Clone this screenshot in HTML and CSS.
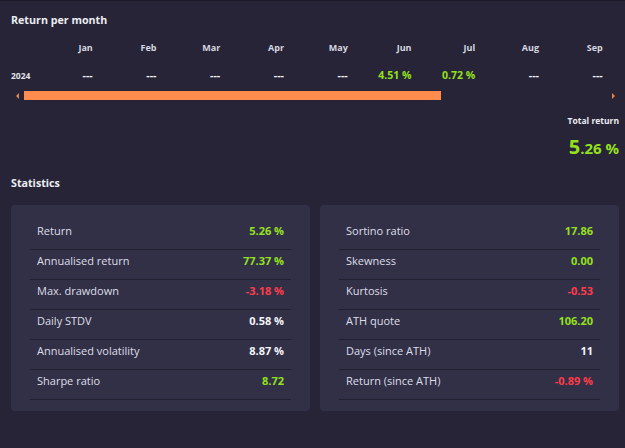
FILE: index.html
```html
<!DOCTYPE html>
<html lang="en">
<head>
    <meta charset="UTF-8">
    <meta name="viewport" content="width=device-width, initial-scale=1.0">
    <title>Performance</title>
    <link rel="stylesheet" href="styles.css">
</head>
<body>
    <div class="page">
        <h2 class="section-title">Return per month</h2>

        <div class="monthly">
            <div class="month-grid">
                <div class="cell label"></div>
                <div class="cell head">Jan</div>
                <div class="cell head">Feb</div>
                <div class="cell head">Mar</div>
                <div class="cell head">Apr</div>
                <div class="cell head">May</div>
                <div class="cell head">Jun</div>
                <div class="cell head">Jul</div>
                <div class="cell head">Aug</div>
                <div class="cell head">Sep</div>

                <div class="cell label">2024</div>
                <div class="cell val">---</div>
                <div class="cell val">---</div>
                <div class="cell val">---</div>
                <div class="cell val">---</div>
                <div class="cell val">---</div>
                <div class="cell val pos">4.51 %</div>
                <div class="cell val pos">0.72 %</div>
                <div class="cell val">---</div>
                <div class="cell val">---</div>
            </div>
        </div>

        <div class="scrollbar">
            <div class="scroll-btn"><span class="arrow-left"></span></div>
            <div class="scroll-track">
                <div class="scroll-thumb"></div>
            </div>
            <div class="scroll-btn"><span class="arrow-right"></span></div>
        </div>

        <div class="total">
            <div class="total-label">Total return</div>
            <div class="total-value"><span class="int">5</span>.26 %</div>
        </div>

        <h2 class="section-title stats-title">Statistics</h2>

        <div class="stats">
            <div class="card">
                <div class="row"><span>Return</span><span class="num pos">5.26 %</span></div>
                <div class="row"><span>Annualised return</span><span class="num pos">77.37 %</span></div>
                <div class="row"><span>Max. drawdown</span><span class="num neg">-3.18 %</span></div>
                <div class="row"><span>Daily STDV</span><span class="num">0.58 %</span></div>
                <div class="row"><span>Annualised volatility</span><span class="num">8.87 %</span></div>
                <div class="row"><span>Sharpe ratio</span><span class="num pos">8.72</span></div>
            </div>
            <div class="card">
                <div class="row"><span>Sortino ratio</span><span class="num pos">17.86</span></div>
                <div class="row"><span>Skewness</span><span class="num pos">0.00</span></div>
                <div class="row"><span>Kurtosis</span><span class="num neg">-0.53</span></div>
                <div class="row"><span>ATH quote</span><span class="num pos">106.20</span></div>
                <div class="row"><span>Days (since ATH)</span><span class="num">11</span></div>
                <div class="row"><span>Return (since ATH)</span><span class="num neg">-0.89 %</span></div>
            </div>
        </div>
    </div>
</body>
</html>
```

FILE: styles.css
```css
body {
    margin: 0;
    background-color: #262436;
    color: #e2e2ea;
    font-family: 'Open Sans', 'Noto Sans', sans-serif;
    border-top: 1px solid #1d1b2a;
}

.page {
    padding: 9px 6px 0 11px;
}

.section-title {
    margin: 0;
    font-size: 10.7px;
    font-weight: 700;
    line-height: 20px;
    color: #ececf2;
}

.monthly {
    overflow: hidden;
    margin-top: 3px;
}

.month-grid {
    display: grid;
    grid-template-columns: 18px repeat(9, 63.75px);
    grid-auto-rows: 28px;
    align-items: center;
    font-size: 9px;
    font-weight: 700;
}

.cell {
    text-align: right;
    white-space: nowrap;
}

.cell.label {
    text-align: left;
    font-size: 8.5px;
}

.cell.head {
    color: #d6d6e0;
}

.cell.val {
    font-size: 10.5px;
    color: #f2f2f6;
}

.pos {
    color: #95e01c !important;
}

.neg {
    color: #ff3b4a !important;
}

.scrollbar {
    display: flex;
    height: 9px;
    margin-top: 2px;
}

.scroll-btn {
    width: 12px;
    display: flex;
    align-items: center;
    justify-content: center;
}

.arrow-left {
    width: 0;
    height: 0;
    border-top: 3px solid transparent;
    border-bottom: 3px solid transparent;
    border-right: 3px solid #e8824a;
}

.arrow-right {
    width: 0;
    height: 0;
    border-top: 3px solid transparent;
    border-bottom: 3px solid transparent;
    border-left: 3px solid #e8824a;
}

.scroll-track {
    flex: 1;
    padding-left: 1px;
}

.scroll-thumb {
    width: 71.5%;
    height: 100%;
    background-color: #ff8c4c;
}

.total {
    text-align: right;
    font-weight: 700;
    margin-top: 13px;
}

.total-label {
    font-size: 8.5px;
    line-height: 16px;
    color: #ececf2;
}

.total-value {
    font-size: 15px;
    line-height: 26px;
    margin-top: 5px;
    color: #95e01c;
}

.total-value .int {
    font-size: 20px;
}

.stats-title {
    margin-top: 12px;
}

.stats {
    display: grid;
    grid-template-columns: 1fr 1fr;
    gap: 10px;
    margin-top: 12px;
}

.card {
    background-color: #323047;
    border-radius: 4px;
    padding: 15px 19px 11px;
}

.row {
    display: flex;
    justify-content: space-between;
    align-items: center;
    height: 20px;
    padding: 0 7px 9px;
    border-bottom: 1px solid #222030;
    font-size: 11px;
    color: #dedee8;
}

.num {
    font-weight: 700;
    color: #f4f4f8;
}
```
